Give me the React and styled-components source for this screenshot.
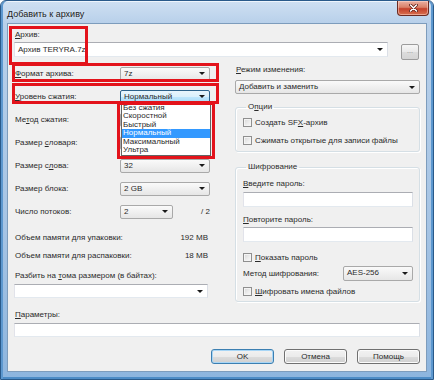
import React from 'react';
import styled, { createGlobalStyle, css } from 'styled-components';

const GlobalStyle = createGlobalStyle`
  html, body { margin: 0; padding: 0; background: #fff; }
  body {
    width: 434px; height: 380px; overflow: hidden;
    font-family: "Liberation Sans", Arial, sans-serif;
    font-size: 8px; color: #2a2a2a;
  }
  * { box-sizing: border-box; }
`;

const RED = '#e3131b';

const markBox = css`
  &::after {
    content: '';
    position: absolute;
    border: 3px solid ${RED};
    pointer-events: none;
    z-index: 3;
  }
`;

const Window = styled.div`
  width: 434px;
  height: 380px;
  display: flex;
  flex-direction: column;
  border: 1px solid #2a5a8a;
  border-radius: 6px 6px 0 0;
  background: linear-gradient(180deg, #cfe0f2 0px, #b8d0ea 22px, #a6c4e4 60%, #8db5de 100%);
  box-shadow: inset 2px 0 0 #5d98cf, inset -2px 0 0 #5d98cf, inset 0 -2px 0 #4d8cc6,
    inset 0 1px 0 #eef5fc;
`;

const TitleBar = styled.div`
  height: 22px;
  flex: none;
  display: flex;
  justify-content: space-between;
  align-items: flex-start;
  padding: 0 4px 0 6px;
`;

const Title = styled.span`
  font-size: 9px;
  line-height: 10px;
  margin-top: 8px;
  color: #1b1b1b;
  text-shadow: 0 0 5px rgba(255, 255, 255, 0.9);
`;

const CloseButton = styled.div`
  width: 32px;
  height: 15px;
  border: 1px solid #6b2a21;
  border-top: none;
  border-radius: 0 0 4px 4px;
  background: linear-gradient(180deg, #eab0a2 0%, #d98068 45%, #c4412b 55%, #d8704f 100%);
  display: flex;
  align-items: center;
  justify-content: center;
  box-shadow: inset 0 0 0 1px rgba(255, 220, 210, 0.5);
`;

const Client = styled.div`
  flex: 1;
  margin: 0 6px 7px;
  background: #f0f0f0;
  border: 1px solid #7d9cbc;
  padding: 6px 6px 0 6px;
  display: flex;
  flex-direction: column;
`;

const Label = styled.div`
  line-height: 10px;
  height: 10px;
  white-space: nowrap;
  margin-top: ${p => p.$mt || 0}px;
  padding-left: ${p => p.$pl ?? 1}px;
`;

const U = styled.span`
  text-decoration: underline;
`;

const ArchiveBlock = styled.div`
  position: relative;
  ${markBox}
  &::after { left: -5px; top: -4px; width: 73px; height: 33px; }
`;

const ArchiveRow = styled.div`
  display: flex;
  align-items: flex-start;
  gap: 13px;
  margin-top: 2px;
  height: 15px;
`;

const comboSkins = {
  edit: css`
    background: #fff;
    border-color: #abadb3 #dbdfe6 #e3e9ef #e2e3ea;
  `,
  list: css`
    background: linear-gradient(180deg, #fafafa 0%, #f0f0f0 50%, #e6e6e6 100%);
    border-color: #a9a9a9;
    border-radius: 2px;
  `,
  open: css`
    background: linear-gradient(180deg, #e8f5fc 0%, #d9f0fc 50%, #bee6fd 51%, #a7d9f5 100%);
    border-color: #2c628b;
    border-radius: 2px;
  `,
};

const Combo = styled.div`
  position: relative;
  height: ${p => p.$h || 14}px;
  width: ${p => (p.$w ? `${p.$w}px` : '100%')};
  flex: none;
  display: flex;
  align-items: center;
  justify-content: space-between;
  padding: 0 4px 0 3px;
  border: 1px solid;
  line-height: 10px;
  white-space: nowrap;
  ${p => comboSkins[p.$kind || 'list']}
`;

const Arrow = styled.span`
  width: 0;
  height: 0;
  margin-left: auto;
  border-left: 3px solid transparent;
  border-right: 3px solid transparent;
  border-top: 3px solid #1a1a1a;
`;

const BrowseButton = styled.div`
  width: 18px;
  height: 16px;
  margin-top: 2px;
  border: 1px solid #9c9c9c;
  border-radius: 2px;
  background: linear-gradient(180deg, #f6f6f6 0%, #e9e9e9 50%, #dcdcdc 51%, #d4d4d4 100%);
  color: #8a8a8a;
  font-size: 7px;
  line-height: 12px;
  text-align: center;
`;

const Columns = styled.div`
  display: grid;
  grid-template-columns: 199px 185px;
  column-gap: 22px;
  margin-top: 5px;
  align-items: start;
`;

const LeftColumn = styled.div`
  display: flex;
  flex-direction: column;
`;

const RightColumn = styled.div`
  display: flex;
  flex-direction: column;
  padding-top: 3px;
`;

const FieldRow = styled.div`
  position: relative;
  height: 23px;
  display: grid;
  grid-template-columns: 106px auto 1fr;
  align-items: center;
  ${p => p.$mark && markBox}
  ${p => p.$mark && css`
    &::after { left: -2px; width: 201px; top: ${p.$mark[0]}px; bottom: ${p.$mark[1]}px; }
  `}
`;

const Suffix = styled.span`
  justify-self: end;
  padding-right: 3px;
`;

const DropList = styled.div`
  position: absolute;
  top: 100%;
  left: 0;
  width: 90px;
  z-index: 2;
  background: #fff;
  border: 1px solid #646464;
  ${markBox}
  &::after { left: -5px; right: -5px; top: -2px; bottom: -4px; }
`;

const DropItem = styled.div`
  line-height: 8.5px;
  height: 8.5px;
  padding-left: 1px;
  white-space: nowrap;
  background: ${p => (p.$active ? '#3399ff' : 'transparent')};
  color: ${p => (p.$active ? '#fff' : '#2a2a2a')};
`;

const MemoryRow = styled.div`
  height: 18px;
  display: flex;
  align-items: center;
  justify-content: space-between;
  padding: 0 5px 0 1px;
  margin-top: ${p => p.$mt || 0}px;
`;

const Spaced = styled.div`
  margin-top: ${p => p.$mt || 0}px;
`;

const Group = styled.fieldset`
  margin: ${p => p.$mt || 0}px 0 0;
  padding: ${p => p.$pad};
  border: 1px solid #d5dfe5;
  border-radius: 3px;
  box-shadow: 1px 1px 0 #fff, inset 1px 1px 0 #fff;
  min-width: 0;
`;

const Legend = styled.legend`
  padding: 0 2px;
  margin-left: 3px;
  line-height: 10px;
`;

const CheckRow = styled.label`
  height: ${p => p.$h || 16}px;
  display: flex;
  align-items: center;
  gap: 3px;
  margin-top: ${p => p.$mt || 0}px;
  white-space: nowrap;
`;

const CheckBox = styled.span`
  width: 9px;
  height: 9px;
  flex: none;
  border: 1px solid #8f8f8f;
  background: linear-gradient(135deg, #d6d6d6 0%, #eeeeee 60%, #f8f8f8 100%);
  box-shadow: inset 0 0 0 1px #f4f4f4;
`;

const TextInput = styled.div`
  height: ${p => p.$h || 15}px;
  margin-top: ${p => p.$mt || 0}px;
  background: #fff;
  border: 1px solid;
  border-color: #abadb3 #dbdfe6 #e3e9ef #e2e3ea;
`;

const MethodRow = styled.div`
  height: 16px;
  display: flex;
  align-items: center;
  justify-content: space-between;
`;

const ButtonBar = styled.div`
  display: flex;
  justify-content: flex-end;
  gap: 10px;
  margin-top: 12px;
`;

const Button = styled.div`
  width: 63px;
  height: 15px;
  border: 1px solid ${p => (p.$default ? '#3c7fb1' : '#707070')};
  border-radius: 3px;
  background: linear-gradient(180deg, #f2f2f2 0%, #ebebeb 50%, #dddddd 51%, #cfcfcf 100%);
  box-shadow: inset 0 0 0 1px ${p => (p.$default ? '#a8d6f6' : '#fbfbfb')};
  line-height: 13px;
  text-align: center;
`;

const levels = ['Без сжатия', 'Скоростной', 'Быстрый', 'Нормальный', 'Максимальный', 'Ультра'];

function CloseGlyph() {
  return (
    <svg width="9" height="8" viewBox="0 0 9 8">
      <path d="M1.5 1 L7.5 7 M7.5 1 L1.5 7" stroke="#5a1810" strokeWidth="3" strokeLinecap="round" />
      <path d="M1.5 1 L7.5 7 M7.5 1 L1.5 7" stroke="#fff" strokeWidth="1.6" strokeLinecap="round" />
    </svg>
  );
}

export default function App() {
  return (
    <>
      <GlobalStyle />
      <Window>
        <TitleBar>
          <Title>Добавить к архиву</Title>
          <CloseButton><CloseGlyph /></CloseButton>
        </TitleBar>
        <Client>
          <ArchiveBlock>
            <Label><U>А</U>рхив:</Label>
            <ArchiveRow>
              <Combo $kind="edit" $w={374} $h={15}>
                <span>Архив TERYRA.7z</span>
                <Arrow />
              </Combo>
              <BrowseButton>...</BrowseButton>
            </ArchiveRow>
          </ArchiveBlock>

          <Columns>
            <LeftColumn>
              <FieldRow $mark={[1, 3]}>
                <Label><U>Ф</U>ормат архива:</Label>
                <Combo $w={90}><span>7z</span><Arrow /></Combo>
              </FieldRow>
              <FieldRow $mark={[-2, 4]}>
                <Label><U>У</U>ровень сжатия:</Label>
                <Combo $w={90} $kind="open">
                  <span>Нормальный</span>
                  <Arrow />
                  <DropList>
                    {levels.map(l => (
                      <DropItem key={l} $active={l === 'Нормальный'}>{l}</DropItem>
                    ))}
                  </DropList>
                </Combo>
              </FieldRow>
              <FieldRow>
                <Label>Ме<U>т</U>од сжатия:</Label>
                <Combo $w={90}><Arrow /></Combo>
              </FieldRow>
              <FieldRow>
                <Label>Размер <U>с</U>ловаря:</Label>
                <Combo $w={90}><Arrow /></Combo>
              </FieldRow>
              <FieldRow>
                <Label>Размер с<U>л</U>ова:</Label>
                <Combo $w={90}><span>32</span><Arrow /></Combo>
              </FieldRow>
              <FieldRow>
                <Label>Размер блока:</Label>
                <Combo $w={90}><span>2 GB</span><Arrow /></Combo>
              </FieldRow>
              <FieldRow>
                <Label>Число потоков:</Label>
                <Combo $w={53}><span>2</span><Arrow /></Combo>
                <Suffix>/ 2</Suffix>
              </FieldRow>
              <MemoryRow $mt={5}>
                <span>Объем памяти для упаковки:</span>
                <span>192 MB</span>
              </MemoryRow>
              <MemoryRow>
                <span>Объем памяти для распаковки:</span>
                <span>18 MB</span>
              </MemoryRow>
              <Label $mt={7}>Разбить на <U>т</U>ома размером (в байтах):</Label>
              <Spaced $mt={3}>
                <Combo $kind="edit" $w={194}><Arrow /></Combo>
              </Spaced>
            </LeftColumn>

            <RightColumn>
              <Label><U>Р</U>ежим изменения:</Label>
              <Spaced $mt={5}>
                <Combo><span>Добавить и заменить</span><Arrow /></Combo>
              </Spaced>

              <Group $mt={8} $pad="1px 6px 2px 7px">
                <Legend>О<U>п</U>ции</Legend>
                <CheckRow $h={18}>
                  <CheckBox />
                  <span>Создать SF<U>X</U>-архив</span>
                </CheckRow>
                <CheckRow $h={18}>
                  <CheckBox />
                  <span>Сжимать открытые для записи файлы</span>
                </CheckRow>
              </Group>

              <Group $mt={10} $pad="7px 6px 2px 7px">
                <Legend>Шифрование</Legend>
                <Label $pl={0}><U>В</U>ведите пароль:</Label>
                <TextInput $mt={3} />
                <Label $pl={0} $mt={8}><U>П</U>овторите пароль:</Label>
                <TextInput $mt={2} />
                <CheckRow $mt={7}>
                  <CheckBox />
                  <span><U>П</U>оказать пароль</span>
                </CheckRow>
                <MethodRow>
                  <span>Метод шифрования:</span>
                  <Combo $w={70} $h={15}><span>AES-256</span><Arrow /></Combo>
                </MethodRow>
                <CheckRow $mt={2}>
                  <CheckBox />
                  <span><U>Ш</U>ифровать имена файлов</span>
                </CheckRow>
              </Group>
            </RightColumn>
          </Columns>

          <Label $mt={8}><U>П</U>араметры:</Label>
          <TextInput $mt={3} $h={14} />

          <ButtonBar>
            <Button $default>OK</Button>
            <Button>Отмена</Button>
            <Button>Помощь</Button>
          </ButtonBar>
        </Client>
      </Window>
    </>
  );
}
